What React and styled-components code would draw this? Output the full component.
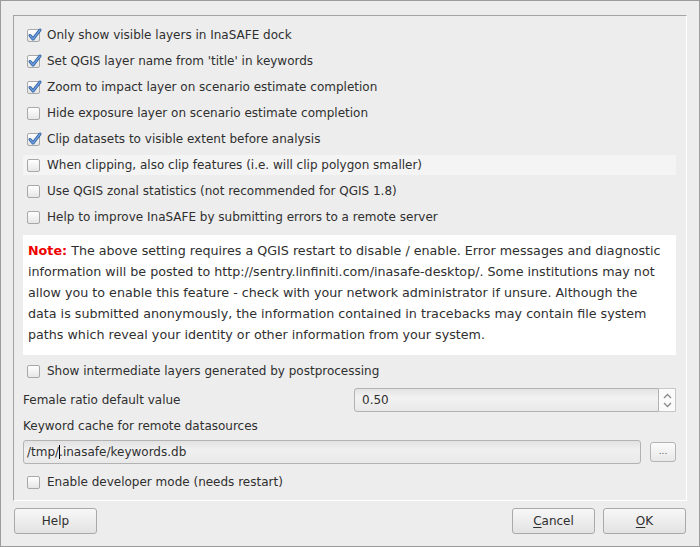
import React from "react";
import styled, { createGlobalStyle } from "styled-components";

const Global = createGlobalStyle`
  html, body { margin: 0; padding: 0; background: #ededed; }
  body { font-family: "DejaVu Sans", "Liberation Sans", sans-serif; font-size: 12px; color: #2f2f2f; }
`;

const Window = styled.div`
  box-sizing: border-box;
  width: 700px;
  height: 547px;
  border: 1px solid #9c9c9c;
  background: #ededed;
  padding: 14px 12px 0 12px;
  display: flex;
  flex-direction: column;
`;

const Frame = styled.div`
  box-sizing: border-box;
  height: 486px;
  border-top: 1px solid #a3a3a3;
  border-left: 1px solid #a3a3a3;
  border-right: 1px solid #ffffff;
  border-bottom: 1px solid #ffffff;
  padding: 9px 10px 0 9px;
  display: flex;
  flex-direction: column;
`;

const CheckRow = styled.div`
  height: 20px;
  margin-bottom: ${(p) => (p.$last ? 8 : 6)}px;
  display: flex;
  align-items: center;
  padding-left: 4px;
  gap: 7px;
  background: ${(p) => (p.$hover ? "#f4f4f4" : "transparent")};
  white-space: nowrap;
`;

const Box = styled.span`
  box-sizing: border-box;
  position: relative;
  width: 13px;
  height: 13px;
  border: 1px solid #a8a8a8;
  border-radius: 2px;
  background: linear-gradient(#ffffff, #e6e6e6);
  flex: none;
`;

const Tick = styled.svg`
  position: absolute;
  left: -1px;
  top: -3px;
  width: 15px;
  height: 15px;
  overflow: visible;
`;

const Check = ({ checked, label, hover, last }) => (
  <CheckRow $hover={hover} $last={last}>
    <Box>
      {checked && (
        <Tick viewBox="0 0 15 15">
          <path d="M3 8.5 L6 12 L13 3" fill="none" stroke="#2f5f9e" strokeWidth="3" strokeLinecap="round" strokeLinejoin="round" />
          <path d="M3 8.5 L6 12 L13 3" fill="none" stroke="#6d9ee0" strokeWidth="1.4" strokeLinecap="round" strokeLinejoin="round" />
        </Tick>
      )}
    </Box>
    <span>{label}</span>
  </CheckRow>
);

const Note = styled.div`
  background: #ffffff;
  padding: 5px 8px 10px 5px;
  font-size: 12.7px;
  line-height: 21px;
  margin-bottom: 6px;
  color: #2f2f2f;
  white-space: nowrap;
`;

const NoteTag = styled.b`
  color: #ee0000;
`;

const FieldRow = styled.div`
  display: flex;
  align-items: center;
  justify-content: space-between;
  height: 24px;
  margin-top: 1px;
  margin-bottom: 4px;
`;

const Label = styled.div`
  height: 20px;
  display: flex;
  align-items: center;
  margin-bottom: 4px;
`;

const Spin = styled.div`
  display: flex;
  width: 322px;
  height: 24px;
`;

const SpinField = styled.div`
  box-sizing: border-box;
  flex: 1;
  border: 1px solid #b2b2b2;
  border-radius: 3px 0 0 3px;
  background: linear-gradient(#e4e4e4, #f2f2f2 40%, #e8e8e8);
  padding-left: 7px;
  display: flex;
  align-items: center;
`;

const SpinButtons = styled.div`
  box-sizing: border-box;
  width: 17px;
  border: 1px solid #c8c8c8;
  border-left: none;
  background: #fbfbfb;
  display: flex;
  flex-direction: column;
  align-items: center;
  justify-content: space-around;
  padding: 2px 0;
`;

const PathRow = styled.div`
  display: flex;
  align-items: center;
  justify-content: space-between;
  height: 24px;
  margin-bottom: 8px;
`;

const LineEdit = styled.div`
  box-sizing: border-box;
  width: 618px;
  height: 24px;
  border: 1px solid #b2b2b2;
  border-radius: 3px;
  background: linear-gradient(#e2e2e2, #f0f0f0 40%, #e9e9e9);
  padding-left: 3px;
  display: flex;
  align-items: center;
`;

const Caret = styled.span`
  display: inline-block;
  width: 1px;
  height: 14px;
  background: #000;
  vertical-align: middle;
  margin: 0 -1px 0 0;
`;

const SmallButton = styled.div`
  box-sizing: border-box;
  width: 26px;
  height: 20px;
  border: 1px solid #b4b4b4;
  border-radius: 3px;
  background: linear-gradient(#fbfbfb, #e8e8e8);
  display: flex;
  align-items: center;
  justify-content: center;
  font-size: 9px;
  color: #555;
  padding-bottom: 2px;
`;

const ButtonBar = styled.div`
  display: flex;
  align-items: center;
  padding: 7px 1px 0 0;
`;

const Spacer = styled.div`
  flex: 1;
`;

const Button = styled.div`
  box-sizing: border-box;
  width: ${(p) => p.$w || 83}px;
  height: 26px;
  margin-left: ${(p) => p.$ml || 0}px;
  border: 1px solid #a9a9a9;
  border-radius: 3px;
  background: linear-gradient(#f7f7f7, #e3e3e3);
  display: flex;
  align-items: center;
  justify-content: center;
  color: #2f2f2f;
`;

const U = styled.span`
  text-decoration: underline;
  text-underline-offset: 2px;
`;

const Arrow = ({ up }) => (
  <svg width="9" height="6" viewBox="0 0 9 6">
    <path d={up ? "M1 5 L4.5 1.5 L8 5" : "M1 1 L4.5 4.5 L8 1"} fill="none" stroke="#8a8a8a" strokeWidth="1.3" />
  </svg>
);

export default function App() {
  return (
    <>
      <Global />
      <Window>
        <Frame>
          <Check checked label="Only show visible layers in InaSAFE dock" />
          <Check checked label="Set QGIS layer name from 'title' in keywords" />
          <Check checked label="Zoom to impact layer on scenario estimate completion" />
          <Check label="Hide exposure layer on scenario estimate completion" />
          <Check checked label="Clip datasets to visible extent before analysis" />
          <Check hover label="When clipping, also clip features (i.e. will clip polygon smaller)" />
          <Check label="Use QGIS zonal statistics (not recommended for QGIS 1.8)" />
          <Check last label="Help to improve InaSAFE by submitting errors to a remote server" />
          <Note>
            <NoteTag>Note:</NoteTag> The above setting requires a QGIS restart to disable / enable. Error messages and diagnostic
            <br />
            information will be posted to http://sentry.linfiniti.com/inasafe-desktop/. Some institutions may not
            <br />
            allow you to enable this feature - check with your network administrator if unsure. Although the
            <br />
            data is submitted anonymously, the information contained in tracebacks may contain file system
            <br />
            paths which reveal your identity or other information from your system.
          </Note>
          <Check label="Show intermediate layers generated by postprocessing" />
          <FieldRow>
            <span>Female ratio default value</span>
            <Spin>
              <SpinField>0.50</SpinField>
              <SpinButtons>
                <Arrow up />
                <Arrow />
              </SpinButtons>
            </Spin>
          </FieldRow>
          <Label>Keyword cache for remote datasources</Label>
          <PathRow>
            <LineEdit>
              <span>/tmp/<Caret />.inasafe/keywords.db</span>
            </LineEdit>
            <SmallButton>...</SmallButton>
          </PathRow>
          <Check label="Enable developer mode (needs restart)" />
        </Frame>
        <ButtonBar>
          <Button $w={83} $ml={1}>Help</Button>
          <Spacer />
          <Button $w={83}><U>C</U>ancel</Button>
          <Button $w={83} $ml={8}><U>O</U>K</Button>
        </ButtonBar>
      </Window>
    </>
  );
}
